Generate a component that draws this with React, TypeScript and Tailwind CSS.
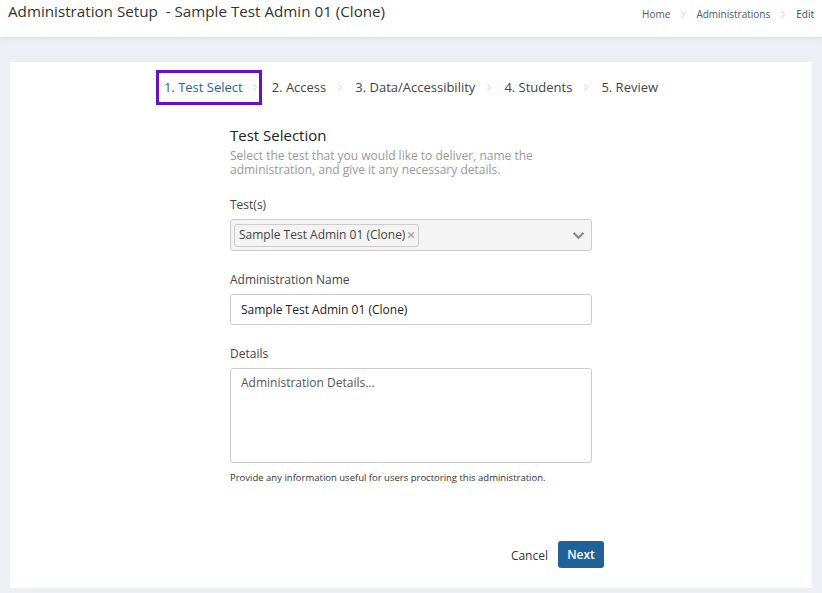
import React from "react";

const Chevron = ({ className }: { className?: string }) => (
  <svg viewBox="0 0 8 12" className={className} fill="none" stroke="currentColor" strokeWidth="1.2">
    <path d="M2 1.5l4 4.5-4 4.5" />
  </svg>
);

const steps = ["1. Test Select", "2. Access", "3. Data/Accessibility", "4. Students", "5. Review"];

const App = () => {
  return (
    <div className="min-h-[593px] bg-[#eceff3] font-['Open_Sans',sans-serif]">
      <header className="h-[37px] bg-white shadow-[0_1px_4px_rgba(0,0,0,0.08)] flex justify-between pl-2 pr-[8px]">
        <div className="text-[15.2px] leading-[22px] text-[#333]">
          Administration Setup&nbsp; - Sample Test Admin 01 (Clone)
        </div>
        <nav className="flex items-center gap-[10px] text-[10px] h-[28px] text-[#4a5868]">
          <span>Home</span>
          <Chevron className="w-[6px] h-[9px] text-[#ccc]" />
          <span>Administrations</span>
          <Chevron className="w-[6px] h-[9px] text-[#ccc]" />
          <span className="text-[#1f4f80]">Edit</span>
        </nav>
      </header>

      <main className="px-[10px] pt-[25px] pb-[5px]">
        <div className="bg-white h-[526px] pt-[8px]">
          <div className="flex justify-center items-center text-[13px] text-[#444] pr-[8px]">
            {steps.map((s, i) =>
              i === 0 ? (
                <div key={s} className="flex items-center h-[35px] border-[3px] border-[#6a0fc8] pl-[5px] pr-[1px]">
                  <span className="text-[#2a62a0]">{s}</span>
                  <Chevron className="w-[6px] h-[9px] ml-[9px] text-[#ccc]" />
                </div>
              ) : (
                <div key={s} className="flex items-center ml-[10px]">
                  <span>{s}</span>
                  {i < steps.length - 1 && <Chevron className="w-[6px] h-[9px] ml-[11px] mr-[2px] text-[#ccc]" />}
                </div>
              )
            )}
          </div>

          <div className="w-[362px] mx-auto mt-[20px]">
            <h2 className="text-[15px] leading-[20px] font-medium text-[#222]">Test Selection</h2>
            <p className="text-[12px] leading-[14px] text-[#999] mt-[4px] pr-[40px]">
              Select the test that you would like to deliver, name the administration, and give it any necessary details.
            </p>

            <label className="block text-[12px] text-[#444] mt-[20px] leading-[16px]">Test(s)</label>
            <div className="mt-[6px] h-[32px] bg-[#f4f4f4] border border-[#ccc] rounded-[3px] flex items-center justify-between pl-[3px] pr-[6px]">
              <div className="h-[23px] flex items-center gap-[2px] border border-[#ccc] rounded-[3px] pl-[4px] pr-[3px] text-[12px] text-[#444]">
                Sample Test Admin 01 (Clone)
                <svg viewBox="0 0 10 10" className="w-[8px] h-[8px] text-[#aaa]" stroke="currentColor" strokeWidth="2">
                  <path d="M1.5 1.5l7 7M8.5 1.5l-7 7" />
                </svg>
              </div>
              <svg viewBox="0 0 14 10" className="w-[13px] h-[9px] text-[#888]" fill="none" stroke="currentColor" strokeWidth="2.4">
                <path d="M1.5 2l5.5 5.5L12.5 2" />
              </svg>
            </div>

            <label className="block text-[12px] text-[#444] mt-[21px] leading-[16px]">Administration Name</label>
            <div className="mt-[6px] h-[31px] border border-[#ccc] rounded-[3px] flex items-center px-[10px] text-[12px] text-[#222]">
              Sample Test Admin 01 (Clone)
            </div>

            <label className="block text-[12px] text-[#444] mt-[21px] leading-[16px]">Details</label>
            <div className="mt-[6px] h-[95px] border border-[#ccc] rounded-[3px] px-[10px] pt-[5px] text-[12px] text-[#555]">
              Administration Details...
            </div>
            <p className="text-[9.5px] text-[#333] mt-[8px]">
              Provide any information useful for users proctoring this administration.
            </p>

            <div className="flex justify-end items-center mt-[56px] mr-[-12px]">
              <button className="text-[12px] text-[#333] mr-[10px] mt-[2px]">Cancel</button>
              <button className="h-[27px] w-[46px] bg-[#1f6199] rounded-[3px] text-white text-[12px] font-semibold">Next</button>
            </div>
          </div>
        </div>
      </main>
    </div>
  );
};

export default App;
